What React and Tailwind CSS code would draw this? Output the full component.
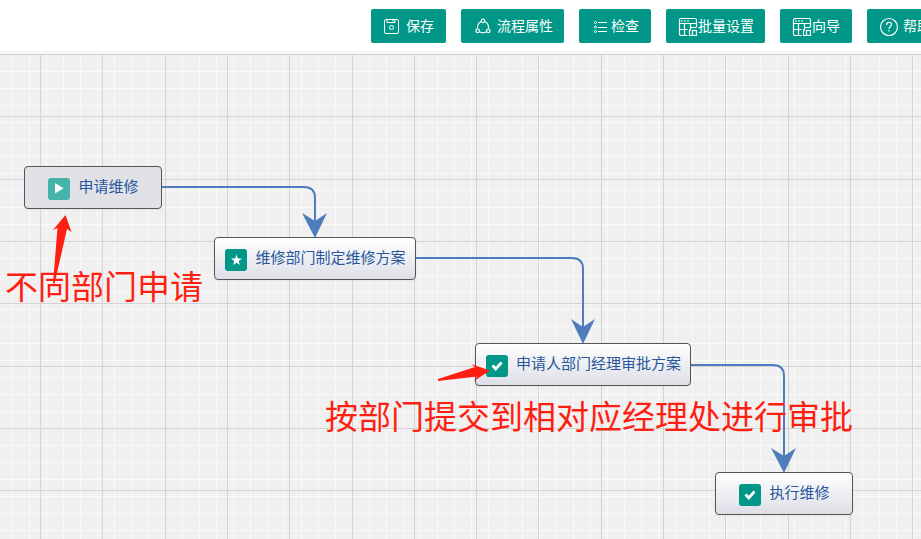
import React from "react";

const FONT = "font-['Noto_Sans',_'Noto_Sans_CJK_SC',sans-serif]";

const majorColumns = Array.from({ length: 40 }, (_, i) => Math.round(40 + i * 62.3));
const majorRows = Array.from({ length: 30 }, (_, i) => Math.round(i * 62.3));
const minorColumns = Array.from({ length: 140 }, (_, i) => 12 + i * 17);
const minorRows = Array.from({ length: 100 }, (_, i) => 17 + i * 17);

function Grid() {
  return (
    <svg className="absolute inset-0 h-full w-full" shapeRendering="crispEdges" aria-hidden="true">
      <g fill="#f9f9f9">
        {minorColumns.map((x) => <rect key={x} x={x} y="0" width="1" height="100%" />)}
        {minorRows.map((y) => <rect key={y} x="0" y={y} width="100%" height="1" />)}
      </g>
      <g fill="#d3d3d3">
        {majorColumns.map((x) => <rect key={x} x={x} y="0" width="1" height="100%" />)}
        {majorRows.map((y) => <rect key={y} x="0" y={y} width="100%" height="1" />)}
      </g>
    </svg>
  );
}

function SaveIcon() {
  return (
    <svg className="h-4 w-4 shrink-0" viewBox="0 0 16 16" fill="none" stroke="currentColor" aria-hidden="true">
      <rect x="1.500" y="1.500" width="14" height="14" rx="1.500" />
      <path d="M4 1.500v3h8v-3M10 1.500v2" />
      <circle cx="8.500" cy="9.500" r="2" />
    </svg>
  );
}

function FlowIcon() {
  return (
    <svg className="h-4 w-4 shrink-0" viewBox="0 0 16 16" fill="none" stroke="currentColor" strokeWidth="1.200" aria-hidden="true">
      <circle cx="8" cy="2.800" r="1.800" />
      <circle cx="2.700" cy="12.800" r="1.800" />
      <circle cx="13.300" cy="12.800" r="1.800" />
      <path d="M6.200 3.500C3.500 4.800 2.200 7.500 2.500 10.800M9.800 3.500c2.700 1.300 4 4 3.700 7.300M4.500 13.800c2 1.200 5 1.200 7 0" />
    </svg>
  );
}

function ListIcon() {
  return (
    <svg className="h-4 w-4 shrink-0" viewBox="0 0 16 16" fill="none" stroke="currentColor" aria-hidden="true">
      <path d="M5 4.500h9M5 9.500h9M5 13.500h9" />
      <circle cx="2.500" cy="4.500" r="1" />
      <circle cx="2.500" cy="9" r="1" />
      <circle cx="2.500" cy="13.500" r="1" />
    </svg>
  );
}

function TableIcon() {
  return (
    <svg className="h-5 w-5 shrink-0" viewBox="0 0 20 20" fill="none" stroke="currentColor" strokeWidth="1.200" aria-hidden="true">
      <path d="M18.500 11V4a1.500 1.500 0 0 0-1.500-1.500H3A1.500 1.500 0 0 0 1.500 4v14A1.500 1.500 0 0 0 3 19.500h6.500M1.500 7.500h17M1.500 13.500h8M6.500 7.500v12" />
      <path d="M3 5h2M6 5h2M9 5h2" />
      <path d="M12.500 7.500v4M18.500 11.500h-6v3M11.500 13.500v6h2.500" />
      <rect x="14.500" y="14.500" width="4" height="5" />
    </svg>
  );
}

function HelpIcon() {
  return (
    <svg className="h-5 w-5 shrink-0" viewBox="0 0 20 20" fill="none" stroke="currentColor" strokeWidth="1.200" aria-hidden="true">
      <circle cx="10" cy="11" r="8.500" />
      <path d="M7.500 9c0-3.500 5-3.500 5-.5 0 2-2.500 2-2.500 4.500M10 14v1.500" />
    </svg>
  );
}

const tools = [
  { label: "保存", Icon: SaveIcon, box: "gap-[7px] px-3" },
  { label: "流程属性", Icon: FlowIcon, box: "gap-1.5 pl-3.5 pr-[11px]" },
  { label: "检查", Icon: ListIcon, box: "gap-0.5 pl-3.5 pr-3" },
  { label: "批量设置", Icon: TableIcon, box: "pl-3 pr-[11px]" },
  { label: "向导", Icon: TableIcon, box: "px-3" },
  { label: "帮助", Icon: HelpIcon, box: "gap-1 px-3" },
];

function Toolbar() {
  return (
    <header className="h-[51px] overflow-hidden bg-white pl-[371px]">
      <div className="flex w-max gap-[15px] pt-[9px]">
        {tools.map(({ label, Icon, box }) => (
          <button key={label} type="button" className={`flex h-[34px] items-center rounded-xs bg-[#009688] text-[14px] leading-5 text-white ${box}`}>
            <Icon />
            <span>{label}</span>
          </button>
        ))}
      </div>
    </header>
  );
}

const glyphs = {
  play: <path d="M7 5v10.500l8.500-5.200z" />,
  star: <path d="M11.500 5.500l1.400 4 4.200.1-3.400 2.500 1.200 4-3.400-2.400-3.400 2.400 1.200-4-3.400-2.500 4.200-.1z" />,
  check: <path d="M5.500 11.500l2-2 2.300 2.200 4.700-5.200 2 2-6.700 7.500z" />,
};

const nodes = [
  { label: "申请维修", glyph: "play", place: "left-[24px] top-[112px] w-[138px]", skin: "bg-[#e1e2e8]", badge: "bg-[#45b5ab]" },
  { label: "维修部门制定维修方案", glyph: "star", place: "left-[214px] top-[183px] w-[202px]", skin: "bg-linear-to-b from-white to-[#dedfe7]", badge: "bg-[#009688]" },
  { label: "申请人部门经理审批方案", glyph: "check", place: "left-[475px] top-[289px] w-[216px]", skin: "bg-linear-to-b from-white to-[#dedfe7]", badge: "bg-[#009688]" },
  { label: "执行维修", glyph: "check", place: "left-[715px] top-[418px] w-[138px]", skin: "bg-linear-to-b from-white to-[#dedfe7]", badge: "bg-[#009688]" },
];

function FlowNode({ label, glyph, place, skin, badge }) {
  return (
    <button type="button" className={`absolute flex h-[43px] items-center justify-center gap-2 rounded-[4px] border border-[#555] pb-px pl-px text-[15px] leading-5 whitespace-nowrap text-[#27569c] shadow-xs ${place} ${skin}`}>
      <svg className={`mt-1 h-[22px] w-[22px] shrink-0 rounded-[3px] text-white ${badge}`} viewBox="0 0 22 22" fill="currentColor" aria-hidden="true">
        {glyphs[glyph]}
      </svg>
      <span className="pb-0.5">{label}</span>
    </button>
  );
}

function Connectors() {
  return (
    <svg className="absolute left-0 top-0 h-[485px] w-[921px]" viewBox="0 54 921 485" aria-hidden="true">
      <g fill="none" stroke="#4f7cbc" strokeWidth="2">
        <path d="M162 187H304Q315 187 315 198V225" />
        <path d="M416 258H572Q583 258 583 269V330" />
        <path d="M691 365H773Q784 365 784 376V460" />
      </g>
      <g fill="#4f7cbc">
        <path d="M315 238L302 213 315 221 327 213z" />
        <path d="M583 344L571 319 583 327 595 319z" />
        <path d="M784 473L771 448 784 456 796 448z" />
      </g>
    </svg>
  );
}

function Marks() {
  return (
    <svg className="absolute left-0 top-0 h-[485px] w-[921px]" viewBox="0 54 921 485" fill="#ff1f12" aria-hidden="true">
      <path d="M65.500 215L71.500 232 67 229 54.500 284 53 283 57.500 228 53 230z" />
      <path d="M490 370.500L471 364 475 367 438 379 438 381 477 376.500 474 381z" />
    </svg>
  );
}

export default function App() {
  return (
    <div className={`flex h-screen flex-col overflow-hidden bg-[#f6f6f6] ${FONT}`}>
      <Toolbar />
      <main className="relative mt-[3px] flex-1 overflow-hidden bg-[#f0f0f0]">
        <Grid />
        <Connectors />
        {nodes.map((node) => <FlowNode key={node.label} {...node} />)}
        <p className="absolute left-[5px] top-[213px] text-[33px] leading-10 whitespace-nowrap text-[#ff1f12]">不同部门申请</p>
        <p className="absolute left-[325px] top-[343px] text-[33px] leading-10 whitespace-nowrap text-[#ff1f12]">按部门提交到相对应经理处进行审批</p>
        <Marks />
      </main>
    </div>
  );
}
